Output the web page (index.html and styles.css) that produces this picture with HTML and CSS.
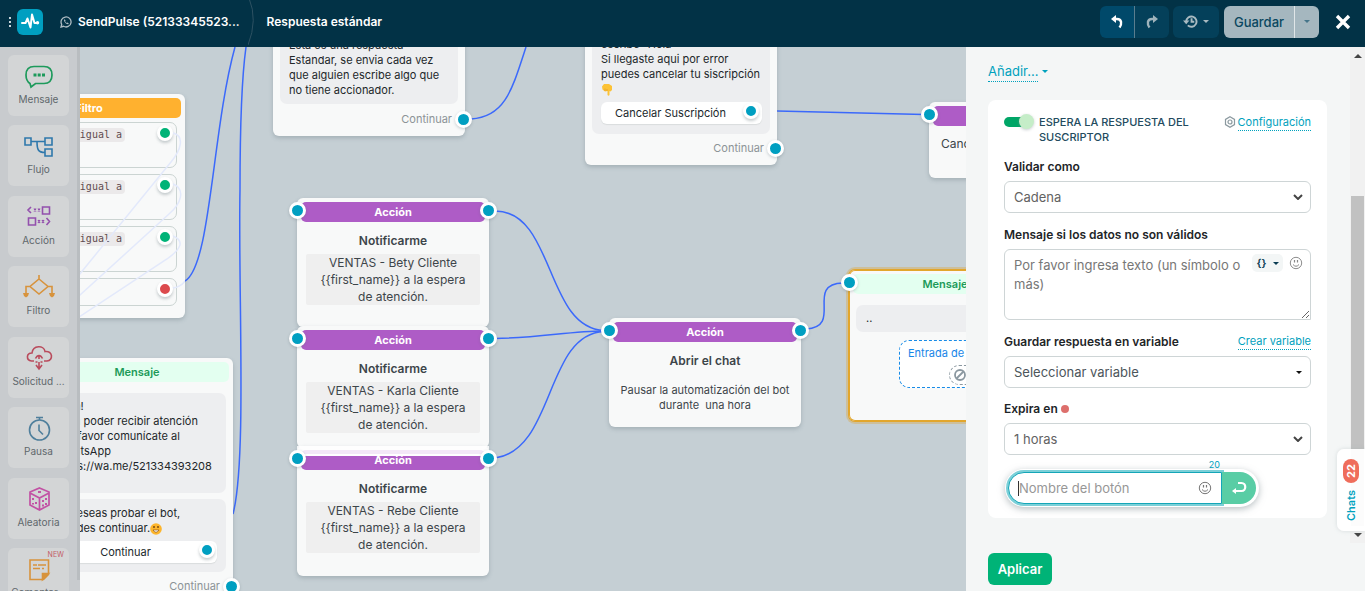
FILE: index.html
```html
<!DOCTYPE html>
<html lang="es">
<head>
<meta charset="utf-8">
<meta name="viewport" content="width=device-width, initial-scale=1">
<title>Respuesta estándar</title>
<link rel="stylesheet" href="styles.css">
</head>
<body>
<header class="topbar">
  <svg class="grip" viewBox="0 0 4 12"><path d="M1 1h2v2H1zM1 5h2v2H1zM1 9h2v2H1z" fill="#c9d6dc"/></svg>
  <a class="logo" href="#" aria-label="SendPulse"><svg viewBox="0 0 26 26"><path d="M5 14h3.500l2-4.500 3 9 1.500-13 2.500 8.500h3" fill="none" stroke="#fff" stroke-width="2" stroke-linejoin="round" stroke-linecap="round"/><circle cx="20.500" cy="13.800" r="1.700" fill="#fff"/></svg></a>
  <a class="bot" href="#">
    <svg viewBox="0 0 12 12" fill="none" stroke="#aebcc3"><path d="M1 11l.7-2.600A5 5 0 1 1 3.600 10.300z" stroke-width="1.300"/><path d="M4 3.600c-.4 2 2 4.700 4.200 4.600l.5-1-1.400-.8-.6.5c-.8-.3-1.300-.8-1.600-1.600l.5-.6-.7-1.300z" fill="#aebcc3" stroke="none"/></svg>
    <span>SendPulse (52133345523...</span>
  </a>
  <svg class="crumb" viewBox="0 0 8 47"><path d="M1 0q9 22-1 47" fill="none" stroke="#2d5162"/></svg>
  <h1 class="flow-name">Respuesta estándar</h1>
  <div class="tools">
    <div class="group">
      <button class="tool on" aria-label="Deshacer"><svg viewBox="0 0 14 14"><path d="M6 0v8L1 4z" fill="#fff"/><path d="M5 4h2c5 0 5 5 2.500 8.500" fill="none" stroke="#fff" stroke-width="2.400"/></svg></button>
      <button class="tool" aria-label="Rehacer"><svg viewBox="0 0 14 14"><path d="M8 0v8l5-4z" fill="#9fb3bb"/><path d="M9 4H7c-5 0-5 5-2.500 8.500" fill="none" stroke="#9fb3bb" stroke-width="2.400"/></svg></button>
    </div>
    <button class="tool history" aria-label="Historial"><svg viewBox="0 0 14 12"><path d="M3 6a4.800 4.800 0 1 1 1.500 3.600M8 3v3.300h2.500" fill="none" stroke="#a9bac1" stroke-width="1.800"/><path d="M0 5h6L3 8.500z" fill="#a9bac1"/></svg><i class="caret"></i></button>
    <div class="group save"><button class="save-main">Guardar</button><button class="save-more" aria-label="Más opciones"><i class="caret"></i></button></div>
    <button class="close" aria-label="Cerrar"><svg viewBox="0 0 16 16"><path d="M2 2l12 12M14 2L2 14" stroke="#fff" stroke-width="3.400"/></svg></button>
  </div>
</header>
<div class="workspace">
  <nav class="palette">
    <div class="tiles">
    <button class="tile"><svg viewBox="0 0 30 26" fill="none" stroke="#1d9a5b" stroke-width="1.700"><path d="M6 20.500C3 18.500 2 16 2 12c0-5.500 3-8.500 8-8.500h10c5 0 8 3 8 8.500s-3 8.500-8 8.500h-8.500L7 24z"/><path d="M9.500 10.500h3v3h-3zM13.700 10.500h3v3h-3zM18 10.500h3v3h-3z" fill="#1d9a5b" stroke="none"/></svg><span>Mensaje</span></button>
    <button class="tile"><svg viewBox="0 0 30 26" fill="none" stroke="#2f78ac" stroke-width="1.600"><path d="M1 5h6v7H1zM21 5h7v7h-7zM21 16h7v7h-7zM7 8.500h14M13 8.500c0 8 1 11 8 11"/></svg><span>Flujo</span></button>
    <button class="tile"><svg viewBox="0 0 30 26" fill="none" stroke="#9350ad" stroke-width="1.600"><path d="M7 3L4 6l3 3M18.500 3h7v7h-7zM4.500 14h7v7h-7zM22.500 14l3 3.500-3 3.500"/><path d="M10 4.500l2 3m0-3l-2 3M14 4.500l2 3m0-3l-2 3M14 16l2 3m0-3l-2 3M18 16l2 3m0-3l-2 3" stroke-width="1.200"/></svg><span>Acción</span></button>
    <button class="tile"><svg viewBox="0 0 32 26" fill="none" stroke="#d7933d" stroke-width="1.600"><path d="M16 1v4M16 5l9 7.500-9 7.500-9-7.500zM7 12.500H3V20M25 12.500h4V20"/><path d="M0 19h6l-1 3-2 1.500L1 22zM26 19h6l-1 3-2 1.500-2-1.500z" fill="#d7933d" stroke="none"/></svg><span>Filtro</span></button>
    <button class="tile"><svg viewBox="0 0 30 26" fill="none" stroke="#b94b5c" stroke-width="1.600"><path d="M10 16H7.500C2 15.500 2 8 8 8 9 0 20 0 21 6.500c8-1 8.500 9 2 9.500h-3"/><path d="M11.500 13.500c2-4 5-4 7 0M15 14v-3.500M12 20l3 4 3-4M15 17v6" /><path d="M11.500 17h2M16.500 17h2"/></svg><span>Solicitud ...</span></button>
    <button class="tile"><svg viewBox="0 0 30 26" fill="none" stroke="#4f7f9c" stroke-width="1.600"><circle cx="15.500" cy="15" r="10"/><path d="M12 2.500h7M15.500 3v2M15 9.500v6l4 4"/></svg><span>Pausa</span></button>
    <button class="tile"><svg viewBox="0 0 30 26" fill="none" stroke="#c251a4" stroke-width="1.700"><path d="M15.500 2L25 6v13l-9.500 5L6 19V6zM6 7l9.500 5L25 7M15.500 12v12"/><path d="M14 6h3M9 12v2M12 16v2M9 17v1.500M19 14v2M22 12v2M19 18.500v2M22 17v2" stroke-width="2"/></svg><span>Aleatoria</span></button>
    <button class="tile"><em class="new">NEW</em><svg viewBox="0 0 30 26" fill="none" stroke="#d7933d" stroke-width="1.600"><path d="M6 4h18.500v14.500l-5 5H6zM9 9h4M14 9h8M9 12.500h7M18 12.500h2"/><path d="M24.500 17.500l-6 6v-6z" fill="#d7933d"/></svg><span>Comentar...</span></button>
    </div>
    <i class="palette-scroll"></i>
  </nav>

  <main class="canvas">
    <svg class="edges"><g transform="translate(-80 -47)">
      <path d="M185 281C211 266 212 130 235 47"/>
      <path d="M233 514C247 460 238 290 240 190Q240 90 246 47"/>
      <path d="M471 119C505 117 512 90 526 47"/>
      <path d="M777 111L924 114.500"/>
      <path d="M495 211C555 211 545 328 604 330.500"/>
      <path d="M495 338.500C540 338 570 331 604 331"/>
      <path d="M495 458C555 450 545 334 604 331.500"/>
      <path d="M806 329C844 327 804 284 843 283"/>
    </g></svg>

    <article class="node filter-node">
      <h2 class="bar orange">Filtro</h2>
      <div class="rule"><code>igual a</code><i class="pin ok"></i></div>
      <div class="rule"><code>igual a</code><i class="pin ok"></i></div>
      <div class="rule"><code>igual a</code><i class="pin ok"></i></div>
      <div class="rule short"><i class="pin no"></i></div>
      <svg class="ghost" viewBox="0 0 106 224"><path d="M94 39C106 42 102 56 92 68L0 181M94 90C107 95 102 110 90 120L0 202M94 142C106 147 102 155 88 165L0 223M94 194q8-1 12-7"/></svg>
    </article>

    <article class="node contact-node">
      <h2 class="bar mint">Mensaje</h2>
      <div class="bubble tall">Hola!<br>Para poder recibir atención<br>por favor comunícate al<br>WhatsApp<br>https://wa.me/521334393208</div>
      <div class="bubble choice">Si deseas probar el bot,<br>puedes continuar.<svg class="emoji" viewBox="0 0 12 12"><circle cx="6" cy="6" r="5.800" fill="#fdb52c"/><path d="M3 7q3 4.500 6 0z" fill="#fff" stroke="#8b5213" stroke-width=".7"/><path d="M4 3v2M8 3v2" stroke="#704311" stroke-width="1.400"/></svg>
        <button class="reply">Continuar<i class="pin"></i></button>
      </div>
      <footer class="next">Continuar<i class="port"></i></footer>
    </article>

    <article class="node standard-node">
      <div class="bubble">Esta es una respuesta<br>Estandar, se envia cada vez<br>que alguien escribe algo que<br>no tiene accionador.</div>
      <footer class="next">Continuar<i class="port"></i></footer>
    </article>

    <article class="node cancel-node">
      <div class="bubble choice">escribe "Hola"<br>Si llegaste aqui por error<br>puedes cancelar tu siscripción<br><svg class="emoji" viewBox="0 0 12 12"><path d="M1 2.500L3 0h5l3 2v4L9.500 7.500 8.500 7v4q-1 1.500-2 0V7L4 7.500 1.500 5.500z" fill="#fcc235"/><path d="M6 5v2M4 4.500V7" stroke="#e9a52a"/></svg>
        <button class="reply">Cancelar Suscripción<i class="pin"></i></button>
      </div>
      <footer class="next">Continuar<i class="port"></i></footer>
    </article>

    <article class="node unsub-node">
      <h2 class="bar violet">Acción</h2><i class="port in"></i>
      <p class="plain">Cancelar suscripción</p>
    </article>

    <article class="node action a1"><h2 class="bar violet">Acción</h2><i class="port in"></i><i class="port out"></i>
      <h3>Notificarme</h3><p class="notice">VENTAS - Bety Cliente {{first_name}} a la espera de atención.</p></article>
    <article class="node action a2"><h2 class="bar violet">Acción</h2><i class="port in"></i><i class="port out"></i>
      <h3>Notificarme</h3><p class="notice">VENTAS - Karla Cliente {{first_name}} a la espera de atención.</p></article>
    <article class="node action a3"><h2 class="bar violet">Acción</h2><i class="veil"></i><i class="port in"></i><i class="port out"></i>
      <h3>Notificarme</h3><p class="notice">VENTAS - Rebe Cliente {{first_name}} a la espera de atención.</p></article>

    <article class="node action open-chat"><h2 class="bar violet">Acción</h2><i class="port in"></i><i class="port out"></i>
      <h3>Abrir el chat</h3><p class="info">Pausar la automatización del bot durante &nbsp;una hora</p></article>

    <article class="node selected"><h2 class="bar mint">Mensaje</h2><i class="port in"></i>
      <div class="bubble">..</div>
      <div class="entry">Entrada de datos<span class="void"><svg viewBox="0 0 14 14"><circle cx="7" cy="7" r="5" fill="none" stroke="#8b98a0" stroke-width="1.800"/><path d="M3.500 10.500l7-7" stroke="#8b98a0" stroke-width="1.800"/></svg></span></div>
    </article>
  </main>

  <aside class="panel">
    <div class="panel-view">
      <div class="panel-body">
        <button class="add"><span>Añadir...</span><i class="caret"></i></button>
        <form class="card">
          <div class="card-head">
            <input class="switch" type="checkbox" id="wait" checked>
            <label class="switch-label" for="wait">ESPERA LA RESPUESTA DEL SUSCRIPTOR</label>
            <svg class="nut" viewBox="0 0 12 12" fill="none" stroke="#8b999f" stroke-width="1.200"><path d="M6 .8l4.500 2.600v5.200L6 11.200 1.500 8.600V3.400z"/><circle cx="6" cy="6" r="2"/></svg>
            <a class="link" href="#">Configuración</a>
          </div>
          <label class="label" for="kind">Validar como</label>
          <div class="pick"><select id="kind"><option>Cadena</option></select><svg viewBox="0 0 10 6"><path d="M1 1l4 4 4-4" fill="none" stroke="#444" stroke-width="2"/></svg></div>
          <label class="label" for="error">Mensaje si los datos no son válidos</label>
          <div class="area"><textarea id="error">Por favor ingresa texto (un símbolo o más)</textarea>
            <div class="area-tools"><button type="button" class="vars" aria-label="Variables">{}<i class="caret"></i></button>
            <button type="button" class="smile" aria-label="Emoji"><svg viewBox="0 0 14 14"><circle cx="7" cy="7" r="5.700" fill="none" stroke="#8d8d8d"/><path d="M5.500 4v2.500M8.500 4v2.500" stroke="#888" stroke-width="1.200"/><path d="M4 8.500q3 3.500 6 0" fill="none" stroke="#888"/></svg></button></div>
          </div>
          <div class="label-row"><label class="label" for="variable">Guardar respuesta en variable</label><a class="link" href="#">Crear variable</a></div>
          <div class="pick dark"><select id="variable"><option>Seleccionar variable</option></select><i class="caret"></i></div>
          <label class="label" for="expire">Expira en <i class="required"></i></label>
          <div class="pick last"><select id="expire"><option>1 horas</option></select><svg viewBox="0 0 10 6"><path d="M1 1l4 4 4-4" fill="none" stroke="#444" stroke-width="2"/></svg></div>
          <div class="namer">
            <span class="left-count">20</span>
            <div class="name-box"><i class="cursor"></i><input type="text" aria-label="Nombre del botón" placeholder="Nombre del botón">
              <button type="button" class="smile" aria-label="Emoji"><svg viewBox="0 0 14 14"><circle cx="7" cy="7" r="5.700" fill="none" stroke="#777"/><path d="M5.500 4v2.500M8.500 4v2.500" stroke="#777" stroke-width="1.200"/><path d="M4 8.500q3 3.500 6 0" fill="none" stroke="#777"/></svg></button></div>
            <button type="button" class="enter" aria-label="Agregar"><svg viewBox="0 0 16 14"><path d="M7 2h3.500c5 0 5 8 0 8H3" fill="none" stroke="#fff" stroke-width="2.200"/><path d="M1 10l4-3v6z" fill="#fff"/></svg></button>
          </div>
        </form>
      </div>
      <div class="track"><i class="arrow up"></i><i class="thumb"></i><i class="arrow down"></i></div>
    </div>
    <footer class="panel-foot"><button class="apply">Aplicar</button></footer>
    <button class="chats"><span>Chats</span><b>22</b></button>
  </aside>
</div>
</body>
</html>
```

FILE: styles.css
```css
* { box-sizing: border-box; }
body { margin: 0; height: 100vh; display: flex; flex-direction: column; overflow: hidden; font-family: Inter, "Liberation Sans", sans-serif; font-size: 13px; color: #3d454a; }
button, input, select, textarea { font: inherit; color: inherit; }
button { border: 0; padding: 0; background: none; }
h1, h2, h3, p { margin: 0; }
a { text-decoration: none; }
svg { display: block; flex: none; }
.caret { flex: none; border: 3px solid transparent; border-top-color: currentColor; border-bottom: 0; }

.topbar { flex: none; height: 47px; padding: 0 14px 4px 8px; display: flex; align-items: center; background: #023246; color: #fff; font-weight: 600; }
.grip { width: 4px; height: 12px; margin-right: 5px; }
.logo { width: 26px; height: 26px; border-radius: 6px; background: #009fc1; }
.bot { display: flex; align-items: center; gap: 6px; margin-left: 17px; color: #fff; font-size: 12px; }
.bot svg { width: 12px; height: 12px; }
.crumb { width: 8px; height: 47px; margin: 0 11px 0 8px; }
.flow-name { font-size: 12px; font-weight: 600; }
.tools { display: flex; margin-left: auto; align-items: center; }
.group { display: flex; border-radius: 6px; overflow: hidden; }
.tool { width: 34px; height: 32px; display: flex; align-items: center; justify-content: center; gap: 5px; background: #04405a; color: #a9bac1; }
.tool.on { width: 35px; background: #00496a; border-right: 1px solid #5a7d8e; }
.tool svg { width: 14px; height: 14px; }
.history { width: 46px; margin: 0 5px 0 4px; border-radius: 6px; }
.history svg { width: 15px; height: 13px; }
.save { background: #a5b7bf; color: #0a4760; font-weight: 500; }
.save-main { width: 70px; height: 32px; }
.save-more { width: 25px; display: flex; align-items: center; justify-content: center; border-left: 1px solid #e0e6e8; color: #45758a; }
.close { margin-left: 16px; }
.close svg { width: 16px; height: 16px; }

.workspace { flex: 1; min-height: 0; display: flex; }
.palette { position: relative; flex: none; width: 80px; padding: 8px; overflow: hidden; background: #c8cbce; }
.palette-scroll { position: absolute; top: 0; right: 0; width: 3px; height: 98%; background: #b9bdc0; }
.tiles { height: 554px; display: flex; flex-direction: column; justify-content: space-between; }
.tile { position: relative; width: 61px; height: 61px; padding-top: 8px; display: flex; flex-direction: column; align-items: center; gap: 3px; border-radius: 6px; background: #d3d5d6; color: #5f686c; font-size: 10px; line-height: 14px; white-space: nowrap; }
.tile svg { width: 32px; height: 26px; }
.new { position: absolute; top: 1px; right: 5px; font-size: 7px; line-height: 12px; font-style: normal; color: #c35d68; }

.canvas { position: relative; flex: 1; min-width: 0; overflow: hidden; background: #c5cfd4; }
.edges { position: absolute; inset: 0; width: 100%; height: 100%; }
.edges path { fill: none; stroke: #3b69fb; stroke-width: 1.5; }
.node { position: absolute; width: 192px; padding: 4px; border-radius: 6px; background: #f8f9f9; box-shadow: 0 2px 4px #5f717a55; }
.bar { height: 20px; border-radius: 5px; text-align: center; font-size: 11px; line-height: 20px; font-weight: 700; color: #fff; }
.orange { background: #ffb12f; }
.mint { background: #e3fff0; color: #209a58; font-weight: 600; }
.violet { background: #ae5cc6; }
.port { position: absolute; width: 17px; height: 17px; border: 3px solid #fff; border-radius: 50%; background: #009fc1; box-shadow: 0 1px 3px #5f717a55; }
.in { left: -8px; top: 4px; }
.out { right: -8px; top: 4px; }
.pin { position: absolute; width: 16px; height: 16px; border: 3px solid #fff; border-radius: 50%; background: #009fc1; box-shadow: 0 2px 3px #8a969b77; }
.ok { background: #00b377; }
.no { background: #dc4a4d; }
.bubble { margin: 0 3px; padding: 7px 9px; border-radius: 7px; background: #edeef0; color: #22272a; font-size: 11px; line-height: 15px; white-space: nowrap; }
.reply { position: relative; display: flex; align-items: center; justify-content: center; width: 161px; height: 22px; padding-right: 22px; border-radius: 6px; background: #fff; box-shadow: 0 1px 1px #d9dcdd; font-size: 11px; color: #20282c; }
.reply .pin { top: 1px; right: 3px; }
.emoji { display: inline-block; width: 12px; height: 12px; vertical-align: middle; }
.next { position: absolute; right: 13px; bottom: 9px; font-size: 11px; line-height: 16px; color: #8c9397; }
.next .port { right: -20px; top: 0; }

.filter-node { left: -87px; top: 47px; height: 224px; }
.rule { position: relative; height: 46px; margin: 4px 4px 6px; padding: 5px 51px; border: 1px solid #cbd4d2; border-radius: 7px; text-align: right; }
.rule code { display: block; padding: 0 3px; border-radius: 4px; background: #ebe9ea; font: 10px/14px "DejaVu Sans Mono", monospace; color: #614c50; }
.rule.short { height: 28px; }
.rule .pin { right: 3px; top: 2px; }
.ghost { position: absolute; right: 0; top: 0; width: 106px; height: 224px; }
.ghost path { fill: none; stroke: #e3e9fb; stroke-width: 1.5; }
.contact-node { left: -39px; top: 311px; height: 240px; }
.contact-node .bubble { margin-top: 6px; }
.contact-node .tall { height: 100px; margin-top: 11px; padding-top: 6px; }
.contact-node .reply { margin-top: 5px; margin-left: -9px; width: 169px; padding-right: 14px; }
.contact-node .reply .pin { right: 2px; }
.contact-node .choice { padding-top: 7px; height: 73px; }
.contact-node .next { bottom: 4px; }
.standard-node { left: 193px; top: -30px; height: 119px; }
.standard-node .bubble { margin-top: 10px; padding-bottom: 6px; }
.cancel-node { left: 505px; top: -30px; height: 148px; }
.cancel-node .bubble { margin-top: 10px; padding: 6px 9px 10px; }
.cancel-node .reply { margin-top: 5px; }
.unsub-node { left: 849px; top: 55px; height: 76px; }
.plain { padding: 10px 8px; font-size: 12px; line-height: 16px; white-space: nowrap; }
.action { left: 217px; }
.action h3 { margin-top: 11px; text-align: center; font-size: 12px; line-height: 16px; font-weight: 600; }
.notice { margin: 5px 5px 0; padding: 0 11px; border-radius: 2px; background: #efefef; text-align: center; font-size: 12px; line-height: 17px; }
.a1 { top: 151px; height: 129px; }
.a2 { top: 279px; height: 122px; }
.a3 { top: 399px; height: 130px; }
.veil { position: absolute; left: 0; right: 0; top: 0; height: 10px; border-bottom: 2px solid #fff; background: #ffffffd9; }
.open-chat { left: 529px; top: 271px; height: 109px; }
.info { margin-top: 14px; text-align: center; font-size: 11px; line-height: 15px; }
.selected { left: 769px; top: 223px; height: 151px; box-shadow: 0 0 0 1px #e2a62c inset, 0 0 0 1px #e2a62c, 0 0 0 3px #d7ae5977; }
.selected .bubble { margin-top: 11px; padding: 6px 10px; }
.entry { width: 128px; height: 48px; margin: 8px 0 0 46px; padding: 4px 8px; border: 1px dashed #178be7; border-radius: 10px; background: #fff; color: #1786e8; font-size: 11px; line-height: 16px; white-space: nowrap; }
.void { display: block; width: 26px; height: 20px; margin: 4px 0 0 41px; padding: 2px 3px; border: 1px dashed #8b98a0; border-radius: 10px; }
.void svg { width: 14px; height: 14px; }

.panel { position: relative; flex: none; width: 399px; display: flex; flex-direction: column; background: #f4f6f6; }
.panel-view { flex: 1; min-height: 0; display: flex; }
.panel-body { flex: 1; padding: 14px 23px 27px 22px; }
.add { display: flex; align-items: center; gap: 4px; color: #00a1bd; line-height: 20px; }
.add span { border-bottom: 1px dotted; }
.card { margin-top: 18px; padding: 15px 16px 11px; border-radius: 8px; background: #fff; }
.card-head { display: flex; align-items: flex-start; margin-bottom: 14px; }
.switch { appearance: none; flex: none; position: relative; width: 28px; height: 10px; margin: 2px 7px 0 0; border-radius: 5px; background: #00a667; }
.switch::after { content: ""; position: absolute; right: -2px; top: -3px; width: 15px; height: 15px; border-radius: 50%; background: #c5edc8; box-shadow: 0 1px 3px #8a969b77; }
.switch-label { width: 170px; margin-right: auto; font-size: 11px; line-height: 15px; font-weight: 500; color: #234b5e; }
.nut { width: 12px; height: 12px; margin: 1px 2px 0 0; }
.link { border-bottom: 1px dotted; font-size: 11px; line-height: 15px; color: #00a1bd; }
.label { display: block; font-size: 12px; line-height: 16px; font-weight: 600; color: #1e2528; }
.label-row { display: flex; justify-content: space-between; }
.pick { display: grid; grid-template-columns: 1fr 18px; align-items: center; margin: 6px 0 14px; color: #626262; }
.pick.dark { margin-bottom: 13px; color: #4c555a; }
.pick.last { margin-bottom: 0; }
.pick select { grid-area: 1 / 1 / 2 / 3; appearance: none; height: 32px; padding: 0 9px; border: 1px solid #ced5d6; border-radius: 6px; background: #fff; }
.pick svg, .pick .caret { grid-area: 1 / 2; pointer-events: none; width: 10px; height: 6px; }
.pick .caret { width: 0; height: 0; margin-left: 3px; color: #111; }
.area { position: relative; margin: 6px 0 14px; }
.area textarea { display: block; width: 100%; height: 71px; padding: 6px 60px 6px 9px; border: 1px solid #ced5d6; border-radius: 6px 6px 0; line-height: 19px; color: #777; background: #fff; overflow: hidden; }
.area-tools { position: absolute; top: 5px; right: 8px; display: flex; align-items: center; gap: 6px; }
.vars { display: flex; align-items: center; justify-content: center; gap: 6px; width: 31px; height: 18px; border-radius: 5px; background: #f3f6f6; color: #0a3c52; font-size: 11px; font-weight: 600; }
.smile svg { width: 14px; height: 14px; }
.required { display: inline-block; width: 8px; height: 8px; border-radius: 50%; background: #dd6f6c; }
.namer { position: relative; display: flex; width: 254px; margin: 14px 0 0 1px; padding: 3px; border-radius: 20px; background: #fff; box-shadow: 0 2px 7px #78878c88; }
.left-count { position: absolute; top: -10px; right: 39px; font-size: 9px; line-height: 12px; color: #00a1bd; }
.name-box { flex: 1; min-width: 0; display: flex; align-items: center; height: 32px; padding: 0 9px; border: 1px solid #14a6b8; border-radius: 16px 0 0 16px; box-shadow: 0 0 0 2px #7cd0d8; background: #fff; }
.name-box input { flex: 1; min-width: 0; padding: 0; border: 0; background: none; outline: 0; }
.name-box input::placeholder { color: #979797; }
.cursor { width: 1px; height: 15px; background: #333; }
.enter { width: 34px; display: flex; align-items: center; justify-content: center; border-radius: 0 16px 16px 0; background: #59cda5; }
.enter svg { width: 16px; height: 14px; }
.track { flex: none; width: 15px; display: flex; flex-direction: column; align-items: center; background: #f1f1f1; }
.arrow { flex: none; border: 4px solid transparent; }
.up { margin-top: 3px; border-bottom-color: #444; }
.down { margin: 7px 0 2px; border-top-color: #444; }
.thumb { flex: 1; width: 13px; margin-top: 138px; background: #c1c1c1; }
.panel-foot { flex: none; padding: 10px 22px 6px; }
.apply { width: 64px; height: 32px; border-radius: 6px; background: #00b377; color: #fff; font-weight: 600; }
.chats { position: absolute; right: 0; bottom: 60px; width: 28px; height: 82px; display: flex; align-items: center; justify-content: center; gap: 7px; border-radius: 0 7px 7px 0; background: #fffffff2; box-shadow: 0 0 4px #9aa7ac55; writing-mode: vertical-rl; transform: rotate(180deg); color: #00a1bd; font-size: 11px; font-weight: 600; }
.chats b { width: 16px; height: 24px; border-radius: 8px; background: #ef6d5b; color: #fff; font-size: 11px; line-height: 16px; text-align: center; font-weight: 700; }
```
